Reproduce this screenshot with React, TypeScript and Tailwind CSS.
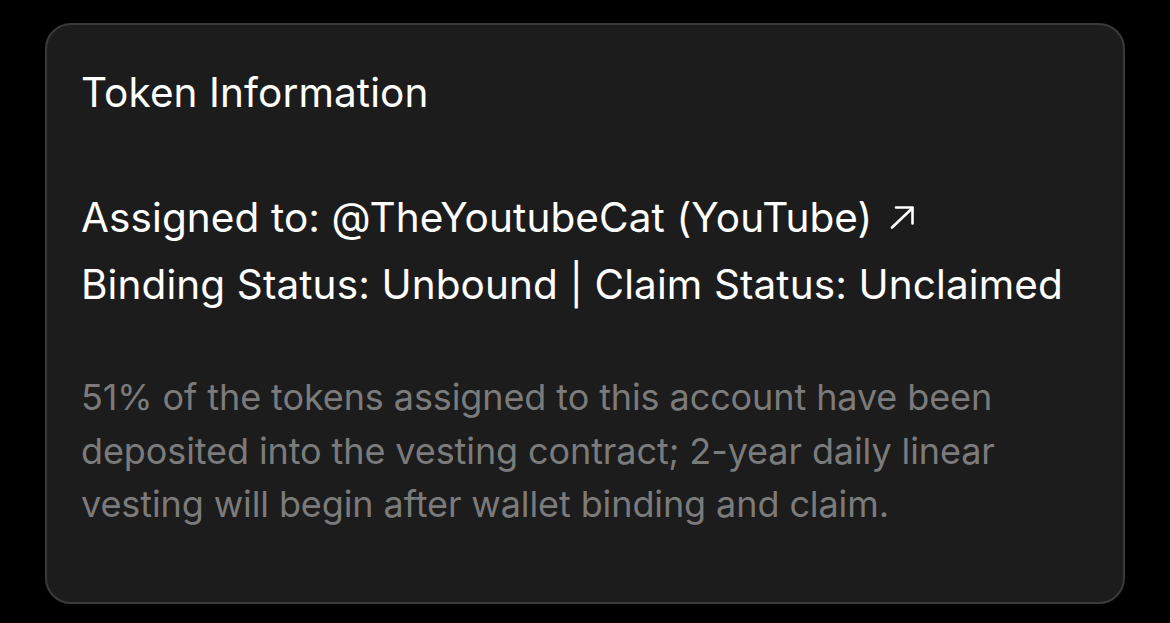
import React from "react";

export default function App() {
  return (
    <div className="min-h-[623px] w-full bg-black px-[45px] pt-[23px]" style={{ fontFamily: "Inter, 'Noto Sans', sans-serif" }}>
      <div className="h-[581px] rounded-[26px] border-2 border-[#3a3a3a] bg-[#1c1c1c] pl-[34px] pr-[36px] pt-[42px]">
        <h2 className="text-[40.5px] leading-[52px] font-normal text-white tracking-[0.1px]">Token Information</h2>
        <div className="mt-[73px] flex flex-col gap-[15px] text-[40.5px] leading-[52px] text-white tracking-[0.1px]">
          <div className="flex items-center">
            <span>Assigned to: @TheYoutubeCat (YouTube)</span>
            <svg className="ml-[17px] mb-[2px]" width="24" height="23" viewBox="0 0 24 23" fill="none" stroke="white" strokeWidth="2.6" strokeLinecap="round" strokeLinejoin="round">
              <path d="M2 21.5 22.5 2" />
              <path d="M6 1.5h16.5v16" />
            </svg>
          </div>
          <div>Binding Status: Unbound | Claim Status: Unclaimed</div>
        </div>
        <p className="mt-[60px] text-[36px] leading-[53.5px] text-[#7b7b7b] tracking-[-0.1px]">
          51% of the tokens assigned to this account have been deposited into the vesting contract; 2-year daily linear vesting will begin after wallet binding and claim.
        </p>
      </div>
    </div>
  );
}
